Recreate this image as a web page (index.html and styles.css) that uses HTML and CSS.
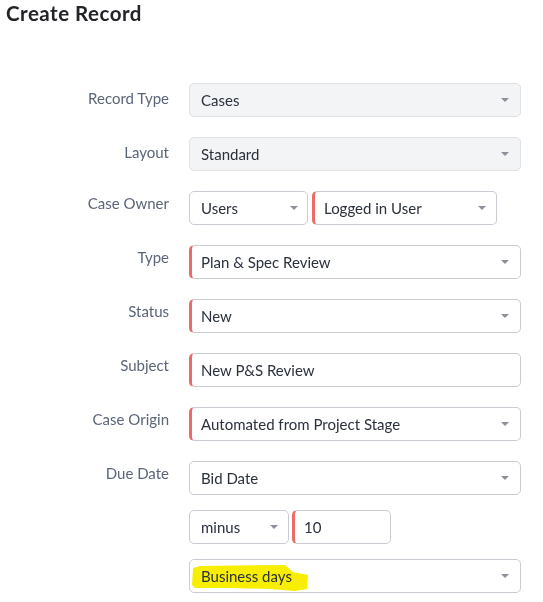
FILE: index.html
```html
<!DOCTYPE html>
<html>
<head>
<meta charset="utf-8">
<link rel="stylesheet" href="styles.css">
</head>
<body>
<h1 class="title">Create Record</h1>
<div class="form">
  <div class="row">
    <div class="label label-mid">Record Type</div>
    <div class="field">
      <div class="select disabled full"><span class="val">Cases</span><span class="caret"></span></div>
    </div>
  </div>
  <div class="row">
    <div class="label label-mid">Layout</div>
    <div class="field">
      <div class="select disabled full"><span class="val">Standard</span><span class="caret"></span></div>
    </div>
  </div>
  <div class="row">
    <div class="label">Case Owner</div>
    <div class="field">
      <div class="pair pair-owner">
        <div class="select w-users"><span class="val">Users</span><span class="caret"></span></div>
        <div class="select req w-logged"><span class="val">Logged in User</span><span class="caret"></span></div>
      </div>
    </div>
  </div>
  <div class="row">
    <div class="label">Type</div>
    <div class="field">
      <div class="select req full"><span class="val">Plan &amp; Spec Review</span><span class="caret"></span></div>
    </div>
  </div>
  <div class="row">
    <div class="label">Status</div>
    <div class="field">
      <div class="select req full"><span class="val">New</span><span class="caret"></span></div>
    </div>
  </div>
  <div class="row">
    <div class="label">Subject</div>
    <div class="field">
      <div class="select req full"><span class="val">New P&amp;S Review</span></div>
    </div>
  </div>
  <div class="row">
    <div class="label">Case Origin</div>
    <div class="field">
      <div class="select req full"><span class="val">Automated from Project Stage</span><span class="caret"></span></div>
    </div>
  </div>
  <div class="row">
    <div class="label">Due Date</div>
    <div class="field group">
      <div class="select full"><span class="val">Bid Date</span><span class="caret"></span></div>
      <div class="pair pair-offset">
        <div class="select w-minus"><span class="val">minus</span><span class="caret"></span></div>
        <div class="select req w-num"><span class="val">10</span></div>
      </div>
      <div class="select full marked">
        <svg class="highlight" width="124" height="34" viewBox="0 0 124 34" aria-hidden="true"><polygon points="4,9 11,7 96,6 104,13 119,16 118,30 106,32 81,30 41,29 6,29 3,26" fill="#f7ee00"/></svg>
        <span class="val">Business days</span><span class="caret"></span>
      </div>
    </div>
  </div>
</div>
</body>
</html>
```

FILE: styles.css
```css
html, body {
  margin: 0;
  padding: 0;
  background: #ffffff;
}
body {
  font-family: Lato, "Liberation Sans", Arial, sans-serif;
  width: 543px;
  height: 602px;
  overflow: hidden;
}
.title {
  margin: 0;
  padding: 1px 0 0 6px;
  font-size: 20.5px;
  line-height: 24px;
  letter-spacing: 0.5px;
  font-weight: 700;
  color: #222428;
}
.form {
  display: flex;
  flex-direction: column;
  gap: 20px;
  padding-top: 58px;
}
.row {
  display: flex;
  gap: 20px;
}
.label {
  width: 169px;
  flex: none;
  text-align: right;
  font-size: 15px;
  line-height: 20px;
  color: #5b6578;
  padding-top: 2px;
}
.label-mid {
  padding-top: 5px;
}
.field {
  width: 332px;
  display: flex;
  flex-direction: column;
}
.group {
  gap: 15px;
}
.pair {
  display: flex;
}
.pair-owner {
  gap: 4px;
}
.pair-offset {
  gap: 3px;
}
.select {
  position: relative;
  box-sizing: border-box;
  height: 34px;
  border: 1px solid #c9ccd2;
  border-radius: 5px;
  background: #ffffff;
  display: flex;
  align-items: center;
  justify-content: space-between;
  padding: 0 11px 1px 11px;
  font-size: 15px;
  color: #2a303c;
}
.full {
  width: 332px;
}
.disabled {
  background: #f3f4f6;
  border-color: #dfe1e5;
}
.req {
  border-left: 3px solid #ee6a6a;
  padding-left: 9px;
}
.w-users { width: 119px; padding-right: 9px; }
.w-logged { width: 185px; padding-right: 10px; }
.w-minus { width: 100px; padding-right: 10px; }
.w-num { width: 99px; }
.val {
  position: relative;
  white-space: nowrap;
}
.caret {
  width: 0;
  height: 0;
  border-left: 4px solid transparent;
  border-right: 4px solid transparent;
  border-top: 4.5px solid #8c9099;
  flex: none;
}
.highlight {
  position: absolute;
  left: -1px;
  top: -1px;
  mix-blend-mode: multiply;
}
```
